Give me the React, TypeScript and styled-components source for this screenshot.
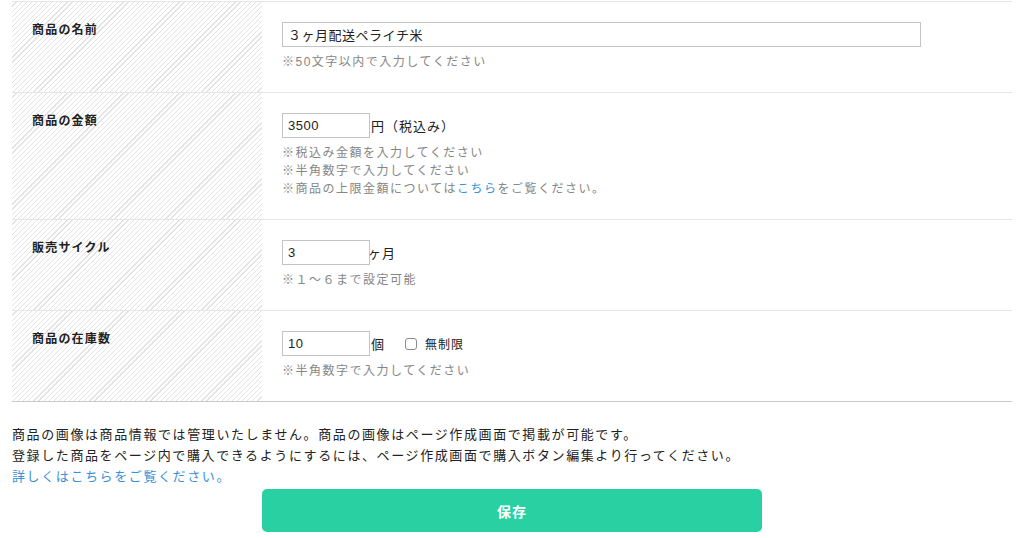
import * as React from 'react'
import styled, { createGlobalStyle } from 'styled-components'

const GlobalStyle = createGlobalStyle`
  body {
    margin: 0;
    background: #fff;
    color: #222;
    font-family: "Liberation Sans", "Noto Sans CJK JP", sans-serif;
  }
`

const Page = styled.div`
  padding: 0 6px 0 12px;
  width: 1000px;
`

const Table = styled.div`
  border-top: 1px solid #e6e6e6;
  border-bottom: 1px solid #c9c9c9;
  margin-top: 1px;
`

const Row = styled.div<{ $last?: boolean }>`
  display: grid;
  grid-template-columns: 250px 1fr;
  border-bottom: ${p => (p.$last ? 'none' : '1px solid #e6e6e6')};
`

const Label = styled.div`
  background: repeating-linear-gradient(
    135deg,
    #fff 0,
    #fff 2.8px,
    #e2e2e2 2.8px,
    #e2e2e2 3.6px
  );
  padding: 19px 20px;
  font-size: 12px;
  line-height: 18px;
  font-weight: bold;
  letter-spacing: 1.2px;
  color: #222;
`

const Field = styled.div`
  padding: 20px 20px 21px;
`

const InputLine = styled.div`
  display: flex;
  align-items: center;
  font-size: 13px;
  color: #222;
  height: 25px;
`

const TextInput = styled.input<{ $width: number }>`
  box-sizing: border-box;
  width: ${p => p.$width}px;
  height: 25px;
  border: 1px solid #c4c4c4;
  padding: 0 5px;
  font-size: 13px;
  font-family: "Liberation Sans", "Noto Sans CJK JP", sans-serif;
  color: #222;
  letter-spacing: 0.5px;
  outline: none;
  margin: 0 1px 0 0;
`

const Unit = styled.span<{ $pull?: number }>`
  font-size: 13px;
  letter-spacing: 1px;
  margin-left: ${p => -(p.$pull ?? 0)}px;
`

const Check = styled.label`
  display: inline-flex;
  align-items: center;
  gap: 8px;
  margin-left: 20px;
  font-size: 12px;
  letter-spacing: 1px;
`

const CheckBox = styled.span`
  box-sizing: border-box;
  width: 12px;
  height: 12px;
  border: 1px solid #8d8d8d;
  border-radius: 3px;
  background: #fff;
`

const Notes = styled.div`
  margin-top: 6px;
  font-size: 12px;
  line-height: 18px;
  letter-spacing: 1.5px;
  color: #868686;
`

const Link = styled.a`
  color: #3a90d6;
  text-decoration: none;
`

const Info = styled.div`
  margin-top: 22px;
  font-size: 13px;
  line-height: 21px;
  letter-spacing: 1.6px;
  color: #222;
`

const Actions = styled.div`
  display: flex;
  justify-content: center;
  margin-top: 2px;
`

const SaveButton = styled.button`
  width: 500px;
  height: 43px;
  border: none;
  border-radius: 5px;
  background: #28d0a2;
  color: #fff;
  font-size: 14px;
  font-weight: bold;
  letter-spacing: 1px;
  font-family: "Liberation Sans", "Noto Sans CJK JP", sans-serif;
`

export default function App() {
  return (
    <Page>
      <GlobalStyle />
      <Table>
        <Row>
          <Label>商品の名前</Label>
          <Field>
            <InputLine>
              <TextInput $width={639} defaultValue="３ヶ月配送ペライチ米" />
            </InputLine>
            <Notes>※50文字以内で入力してください</Notes>
          </Field>
        </Row>
        <Row>
          <Label>商品の金額</Label>
          <Field>
            <InputLine>
              <TextInput $width={88} defaultValue="3500" />
              <Unit>円（税込み）</Unit>
            </InputLine>
            <Notes>
              ※税込み金額を入力してください
              <br />
              ※半角数字で入力してください
              <br />
              ※商品の上限金額については<Link href="#">こちら</Link>をご覧ください。
            </Notes>
          </Field>
        </Row>
        <Row>
          <Label>販売サイクル</Label>
          <Field>
            <InputLine>
              <TextInput $width={88} defaultValue="3" />
              <Unit $pull={3}>ヶ月</Unit>
            </InputLine>
            <Notes>※１〜６まで設定可能</Notes>
          </Field>
        </Row>
        <Row $last>
          <Label>商品の在庫数</Label>
          <Field>
            <InputLine>
              <TextInput $width={88} defaultValue="10" />
              <Unit>個</Unit>
              <Check>
                <CheckBox />
                無制限
              </Check>
            </InputLine>
            <Notes>※半角数字で入力してください</Notes>
          </Field>
        </Row>
      </Table>
      <Info>
        商品の画像は商品情報では管理いたしません。商品の画像はページ作成画面で掲載が可能です。
        <br />
        登録した商品をページ内で購入できるようにするには、ページ作成画面で購入ボタン編集より行ってください。
        <br />
        <Link href="#">詳しくはこちらをご覧ください。</Link>
      </Info>
      <Actions>
        <SaveButton>保存</SaveButton>
      </Actions>
    </Page>
  )
}
